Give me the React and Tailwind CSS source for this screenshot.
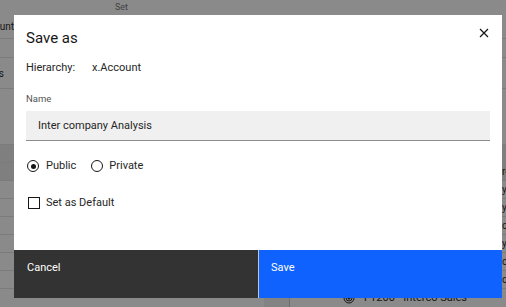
const rows = [
  { h: 'h-[24px]', left: 'Account', pr: 'pr-0', right: '' },
  { h: 'h-[19px]', left: '', pr: 'pr-0', right: '' },
  { h: 'h-[31px]', left: 'Members', pr: 'pr-[10px]', right: '' },
  { h: 'h-[56px]', left: '', pr: 'pr-0', right: '' },
  { h: 'h-[18px]', left: '', pr: 'pr-0', right: '', band: true },
  { h: 'h-[18px]', left: '', pr: 'pr-0', right: 'rollup', band: true },
  { h: 'h-[18px]', left: '', pr: 'pr-0', right: 'year' },
  { h: 'h-[18px]', left: '', pr: 'pr-0', right: 'yield' },
  { h: 'h-[18px]', left: '', pr: 'pr-0', right: 'other' },
  { h: 'h-[18px]', left: '', pr: 'pr-0', right: 'yearly' },
  { h: 'h-[18px]', left: '', pr: 'pr-0', right: 'opex' },
  { h: 'h-[18px]', left: '', pr: 'pr-0', right: 'offset' },
];

function Background() {
  return (
    <div className="w-[506px] h-[307px] bg-white text-[#161616]">
      <div className="h-[15px] flex items-center pl-[115px] text-[9px] text-[#6f6f6f]">Set</div>
      {rows.map((r, i) => (
        <div key={i} className={`${r.h} flex border-b border-[#e0e0e0] ${r.band ? 'bg-[#e8e8e8]' : ''}`}>
          <div className={`w-[14px] ${r.pr} overflow-hidden flex justify-end items-center text-[10px] whitespace-nowrap`}>
            {r.left}
          </div>
          <div className="w-[250px]" />
          <div className="w-[26px] border-r border-[#c6c6c6]" />
          <div className="flex-1 flex items-center pl-[212px] text-[10px] whitespace-nowrap overflow-hidden">
            {r.right}
          </div>
        </div>
      ))}
      <div className="h-[18px] flex">
        <div className="w-[264px]" />
        <div className="w-[26px] bg-[#f0f0f0] border-r border-[#c6c6c6]" />
        <div className="flex-1 flex items-center pl-[53px] gap-[9px] text-[11px] whitespace-nowrap">
          <svg width="12" height="12" viewBox="0 0 12 12">
            <circle cx="6" cy="6" r="5" fill="none" stroke="#161616" strokeWidth="1" />
            <circle cx="6" cy="6" r="3" fill="none" stroke="#161616" strokeWidth="1" />
            <circle cx="6" cy="6" r="1.5" fill="#161616" />
          </svg>
          <span>F1200 - Interco Sales</span>
        </div>
      </div>
    </div>
  );
}

function SaveAsModal() {
  return (
    <div className="absolute left-[14px] top-[15px] w-[488px] h-[283px] bg-white flex flex-col text-[#161616]">
      {/* Header */}
      <div className="flex justify-between items-start pl-[12px] pr-[13px] pt-[13px]">
        <h2 className="text-[15px] leading-[20px]">Save as</h2>
        <svg width="10" height="10" viewBox="0 0 10 10">
          <path d="M1 1L9 9M9 1L1 9" stroke="#161616" strokeWidth="1.2" />
        </svg>
      </div>

      <div className="px-[12px]">
        <div className="mt-[13px] flex text-[11px] leading-[14px] text-[#262626]">
          <span className="w-[66px]">Hierarchy:</span>
          <span>x.Account</span>
        </div>

        <label className="block mt-[18px] text-[9.5px] leading-[12px] text-[#525252]">Name</label>
        <div className="mt-[6px] h-[30px] bg-[#f0f0f0] border-b border-[#8d8d8d] flex items-center pl-[12px] pt-[2px] text-[11px] text-[#262626]">
          Inter company Analysis
        </div>

        <div className="mt-[17px] h-[16px] flex items-center text-[11px] text-[#262626]">
          <span className="ml-[1px] w-[12px] h-[12px] rounded-full border border-[#161616] flex items-center justify-center">
            <span className="w-[5px] h-[5px] rounded-full bg-[#161616]" />
          </span>
          <span className="ml-[7px]">Public</span>
          <span className="ml-[15px] w-[12px] h-[12px] rounded-full border border-[#161616]" />
          <span className="ml-[6px]">Private</span>
        </div>

        <div className="mt-[21px] h-[16px] flex items-center text-[11px] text-[#262626]">
          <span className="ml-[2px] w-[12px] h-[12px] border border-[#161616]" />
          <span className="ml-[6px]">Set as Default</span>
        </div>
      </div>

      {/* Footer */}
      <div className="mt-auto h-[48px] grid grid-cols-2 text-[11px] leading-[14px] text-white">
        <button className="bg-[#333333] text-left pl-[13px] pt-[11px] flex items-start">Cancel</button>
        <button className="bg-[#0f62fe] border-l border-[#c6c6c6] text-left pl-[12px] pt-[11px] flex items-start">Save</button>
      </div>
    </div>
  );
}

export default function App() {
  return (
    <div className="relative w-[506px] h-[307px] overflow-hidden font-['Roboto',sans-serif]">
      <Background />
      <div className="absolute inset-0 bg-[#161616]/50" />
      <SaveAsModal />
    </div>
  );
}
